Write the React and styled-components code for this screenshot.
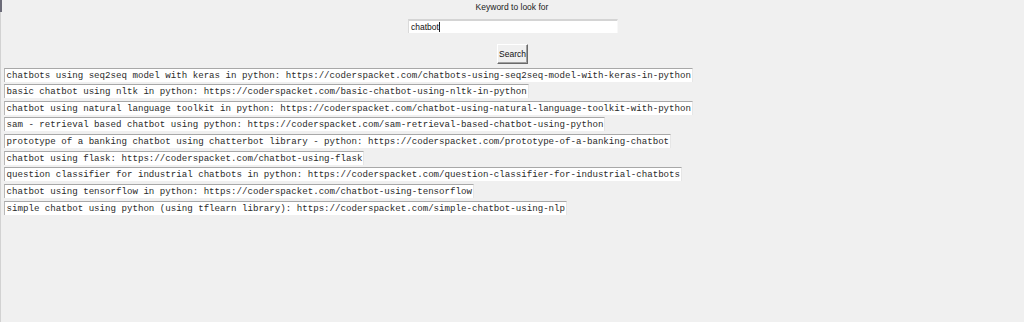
import React from "react";
import styled, { createGlobalStyle } from "styled-components";

const GlobalStyle = createGlobalStyle`
  html, body {
    margin: 0;
    padding: 0;
    height: 100%;
  }
  body {
    background:
      linear-gradient(#6b6b78, #6b6b78) 0 0 / 2px 12px no-repeat,
      linear-gradient(#d2d2d2, #d2d2d2) 0 0 / 1px 100% no-repeat,
      #f0f0f0;
    font-family: "Liberation Sans", Arial, sans-serif;
  }
`;

const Window = styled.div`
  width: 1024px;
  height: 322px;
  display: flex;
  flex-direction: column;
  align-items: center;
`;

const Caption = styled.div`
  font-size: 8.5px;
  color: #1a1a1a;
  margin-top: 2px;
  height: 17px;
  line-height: 11px;
`;

const Entry = styled.div`
  width: 206px;
  height: 12px;
  margin-left: 2px;
  background: #fff;
  border-top: 2px solid #d4d4d4;
  border-left: 1px solid #dadada;
  border-right: 1px solid #f8f8f8;
  border-bottom: 0;
  font-size: 8.5px;
  line-height: 12px;
  padding-left: 2px;
  color: #111;
  display: flex;
  align-items: center;
`;

const Caret = styled.span`
  display: inline-block;
  width: 1.5px;
  height: 10px;
  background: #222;
`;

const Button = styled.button`
  margin-top: 11px;
  margin-left: 1px;
  width: 31px;
  height: 20px;
  padding: 0;
  background: #f0f0f0;
  border: 1px solid;
  border-color: #ffffff #6a6a6a #6a6a6a #ffffff;
  box-shadow: inset -1px -1px 0 #a0a0a0;
  font-family: "Liberation Sans", Arial, sans-serif;
  font-size: 8.5px;
  color: #111;
`;

const Results = styled.div`
  align-self: flex-start;
  display: flex;
  flex-direction: column;
  align-items: flex-start;
  gap: 2.67px;
  margin-top: 3.5px;
  margin-left: 4px;
`;

const Result = styled.div`
  height: 13px;
  background: #fff;
  border-top: 1px solid #a8a8a8;
  border-left: 1px solid #b8b8b8;
  border-right: 1px solid #e6e6e6;
  padding: 0 1px 0 1.5px;
  font-family: "Liberation Mono", "Courier New", monospace;
  font-size: 9.13px;
  line-height: 13px;
  color: #2a2a2a;
  white-space: pre;
`;

const results = [
  "chatbots using seq2seq model with keras in python: https://coderspacket.com/chatbots-using-seq2seq-model-with-keras-in-python",
  "basic chatbot using nltk in python: https://coderspacket.com/basic-chatbot-using-nltk-in-python",
  "chatbot using natural language toolkit in python: https://coderspacket.com/chatbot-using-natural-language-toolkit-with-python",
  "sam - retrieval based chatbot using python: https://coderspacket.com/sam-retrieval-based-chatbot-using-python",
  "prototype of a banking chatbot using chatterbot library - python: https://coderspacket.com/prototype-of-a-banking-chatbot",
  "chatbot using flask: https://coderspacket.com/chatbot-using-flask",
  "question classifier for industrial chatbots in python: https://coderspacket.com/question-classifier-for-industrial-chatbots",
  "chatbot using tensorflow in python: https://coderspacket.com/chatbot-using-tensorflow",
  "simple chatbot using python (using tflearn library): https://coderspacket.com/simple-chatbot-using-nlp",
];

const App = () => {
  return (
    <>
      <GlobalStyle />
      <Window>
        <Caption>Keyword to look for</Caption>
        <Entry>
          chatbot
          <Caret />
        </Entry>
        <Button>Search</Button>
        <Results>
          {results.map((r) => (
            <Result key={r}>{r}</Result>
          ))}
        </Results>
      </Window>
    </>
  );
};

export default App;
